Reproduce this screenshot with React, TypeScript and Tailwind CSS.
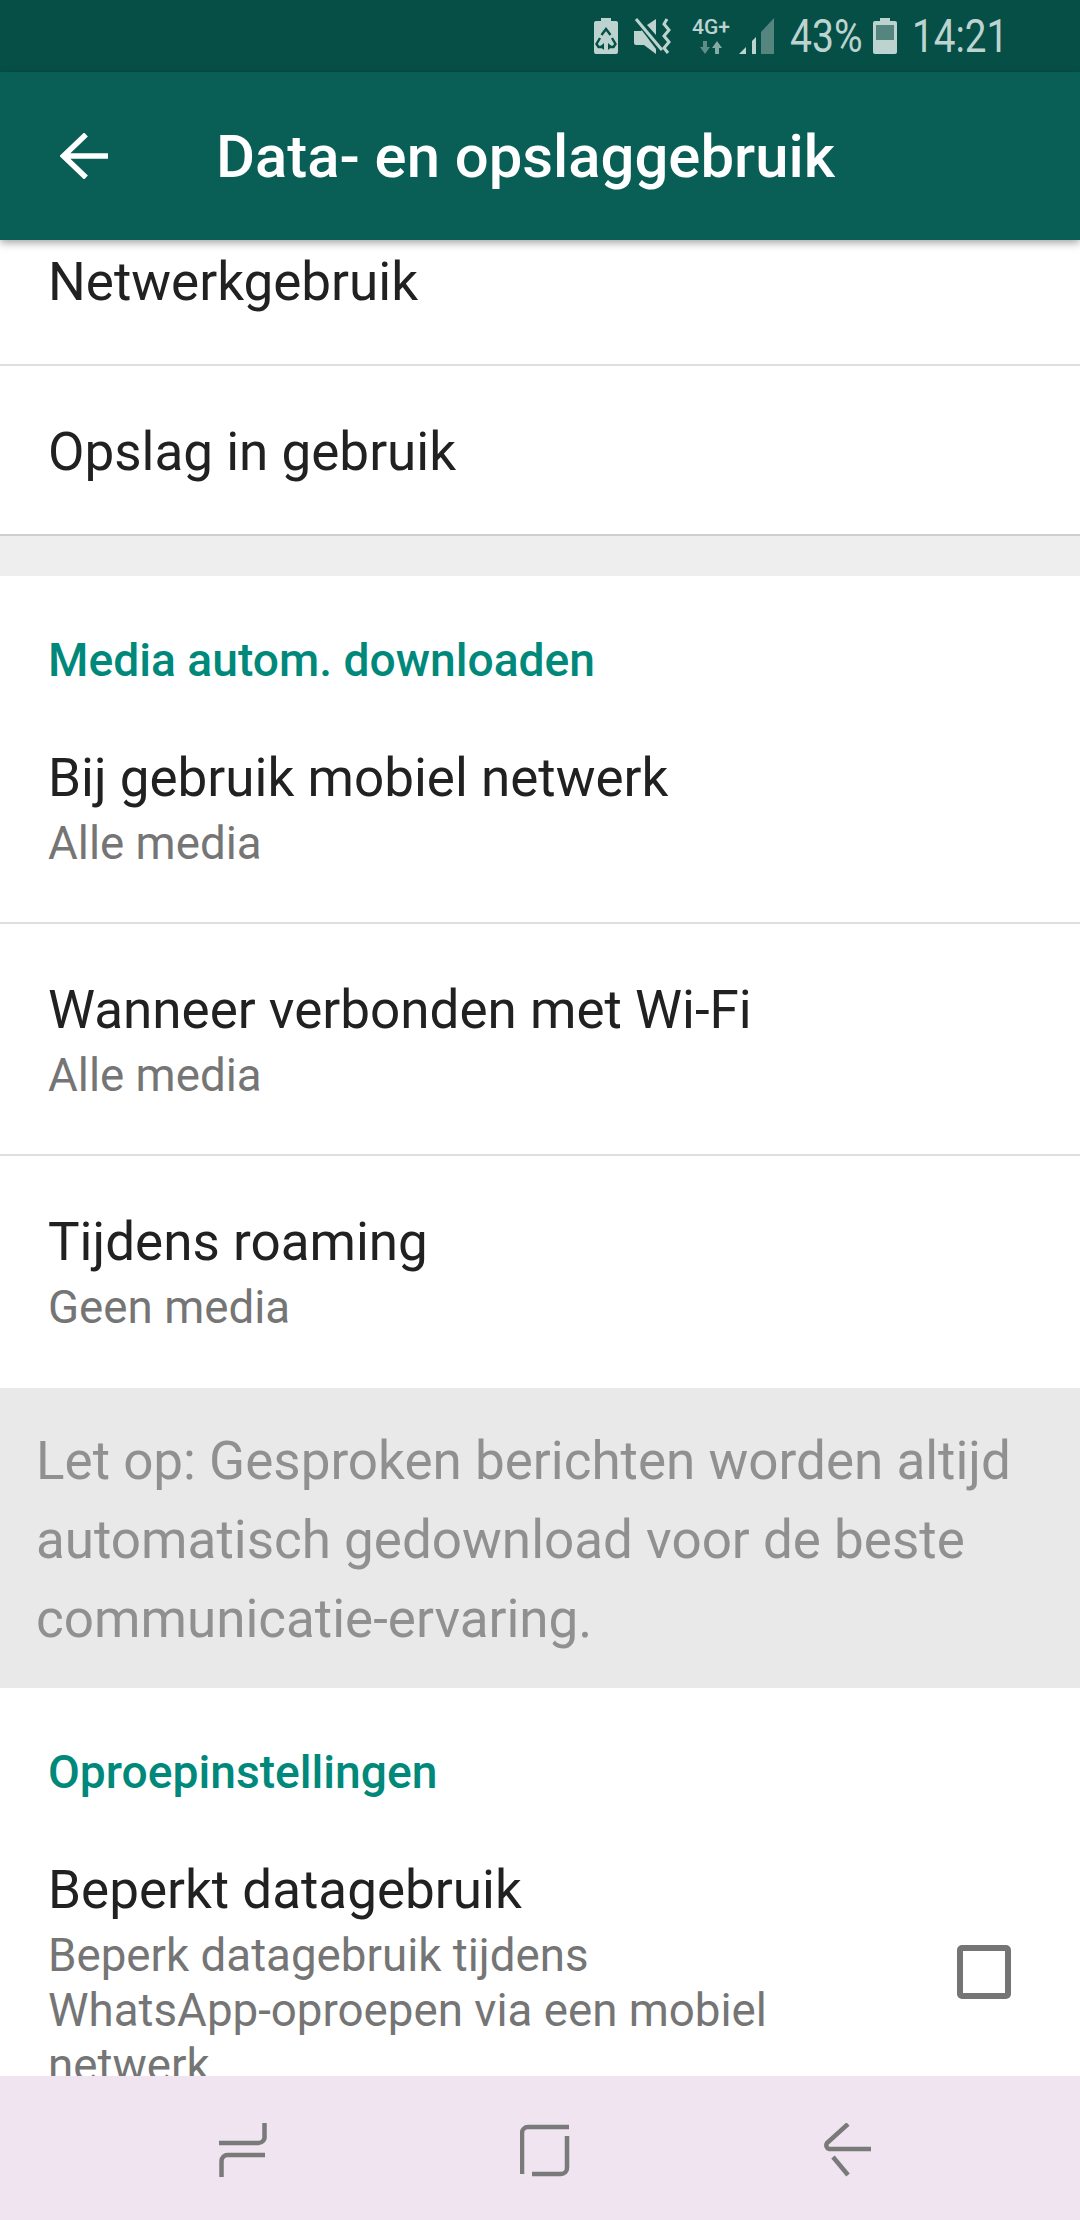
import React from "react";

const Divider = () => <div className="h-[2px] bg-[#dedede]" />;

const SectionLabel = ({ children }: { children: string }) => (
  <div className="px-[48px] pt-[56px] text-[46.200px] leading-[56px] font-medium text-[#00897b]">{children}</div>
);

const MediaRow = ({ title, sub, className }: { title: string; sub: string; className: string }) => (
  <div className={`px-[48px] ${className}`}>
    <div className="text-[53px] leading-[66px] text-[#212121]">{title}</div>
    <div className="text-[45.700px] leading-[56px] mt-[5px] text-[#757575]">{sub}</div>
  </div>
);

const StatusBar = () => (
  <div className="h-[72px] shrink-0 bg-[#064f47] flex items-center justify-end pr-[77px] text-[#bdd3cf]">
    {/* battery saver */}
    <svg width="24" height="36" viewBox="0 0 24 36" className="mr-[16px]">
      <path d="M7 0h10v3h5a2 2 0 0 1 2 2v29a2 2 0 0 1-2 2H2a2 2 0 0 1-2-2V5a2 2 0 0 1 2-2h5z" fill="currentColor" />
      <path
        d="M7.500 17l4.500-6 4.500 6M6 20l-3.500 6 2 3H10M18 20l3.500 6-2 3H14"
        fill="none"
        stroke="#064f47"
        strokeWidth="2.400"
      />
      <path d="M10 25v7l-4-3.500zM14 25v7l4-3.500z" fill="#064f47" />
    </svg>
    {/* vibrate / mute */}
    <svg width="38" height="36" viewBox="0 0 38 36" className="mr-[20px]">
      <path d="M0 13h7l2-2 13 15v10L10 27H2a2 2 0 0 1-2-2z" fill="currentColor" />
      <path d="M13 7l9-6v16z" fill="currentColor" />
      <path d="M2 2l25 33" stroke="#064f47" strokeWidth="3" />
      <path d="M2 1l26 31" stroke="currentColor" strokeWidth="3" />
      <path d="M33 1l-3 5 5 6-5 6 5 6-5 6 4 5" fill="none" stroke="currentColor" strokeWidth="3" />
    </svg>
    {/* 4G+ */}
    <div className="flex flex-col items-center w-[38px] mr-[9px]">
      <span className="text-[21px] leading-[18px] font-medium whitespace-nowrap">4G+</span>
      <svg width="22" height="13" viewBox="0 0 22 13" className="mt-[5px]">
        <path d="M3 0h4v6h3l-5 7-5-7h3z" fill="#5f8d87" />
        <path d="M17 0l5 7h-3v6h-4V7h-3z" fill="#86aaa5" />
      </svg>
    </div>
    {/* signal */}
    <svg width="36" height="36" viewBox="0 0 36 36" className="mr-[15px]">
      <path d="M0 36l7-7v7z" fill="currentColor" />
      <path d="M13 23l4-4v17h-4z" fill="currentColor" />
      <path d="M22 14L35 0v36H22z" fill="#55857f" />
    </svg>
    <span className="text-[46px] leading-none inline-block w-[70px] scale-x-[0.85] origin-left whitespace-nowrap mr-[13px]">
      43%
    </span>
    {/* battery */}
    <svg width="24" height="36" viewBox="0 0 24 36" className="mr-[15px]">
      <path d="M7 0h10v3h5a2 2 0 0 1 2 2v29a2 2 0 0 1-2 2H2a2 2 0 0 1-2-2V5a2 2 0 0 1 2-2h5z" fill="currentColor" />
      <path d="M3 7h18v15H3z" fill="#55857f" />
    </svg>
    <span className="text-[46px] leading-none inline-block w-[91px] scale-x-[0.84] origin-left whitespace-nowrap">14:21</span>
  </div>
);

const Header = () => (
  <div className="relative z-10 h-[168px] shrink-0 bg-[#095e55] flex items-center shadow-[0_3px_8px_rgba(0,0,0,0.35)]">
    <svg width="48" height="46" viewBox="0 0 48 46" className="ml-[60px]">
      <path d="M48 23H3M26 1.500L3.500 23 26 44.500" fill="none" stroke="#fff" strokeWidth="5.500" />
    </svg>
    <div className="ml-[108px] pt-[4px] text-[59.800px] leading-none font-medium text-white whitespace-nowrap">
      Data- en opslaggebruik
    </div>
  </div>
);

const NavBar = () => (
  <div className="h-[144px] shrink-0 bg-[#efe4ef] flex items-start pt-[47px] pl-[219px]">
    <svg width="48" height="54" viewBox="0 0 48 54" fill="none" stroke="#7a7a7a">
      <path d="M45.500 0v13a6 6 0 0 1-6 7H0" strokeWidth="4.500" />
      <path d="M46 32H9a6 6 0 0 0-6.500 6v16" strokeWidth="4.500" />
    </svg>
    <svg width="50" height="54" viewBox="0 0 50 54" fill="none" stroke="#7a7a7a" className="ml-[253px]">
      <path d="M49 4H8a6 6 0 0 0-6 6v41" strokeWidth="4.500" />
      <path d="M47 13v32a6 6 0 0 1-6 6H12" strokeWidth="4.500" />
    </svg>
    <svg width="48" height="54" viewBox="0 0 48 54" fill="none" stroke="#7a7a7a" className="ml-[254px]">
      <path d="M24 1L3 20a4 4 0 0 0 2 6h42" strokeWidth="4.500" />
      <path d="M9 34l15 18" strokeWidth="4.500" />
    </svg>
  </div>
);

export default function App() {
  return (
    <div className="h-[2220px] w-[1080px] flex flex-col overflow-hidden bg-white font-['Roboto',sans-serif]">
      <StatusBar />
      <Header />
      <div className="flex-1 min-h-0 overflow-hidden">
        <div className="h-[124px] px-[48px] pt-[9px] text-[53px] leading-[66px] text-[#212121]">Netwerkgebruik</div>
        <Divider />
        <div className="h-[168px] px-[48px] pt-[53px] text-[53px] leading-[66px] text-[#212121]">Opslag in gebruik</div>
        <div className="h-[2px] bg-[#cfcfcf]" />
        <div className="h-[40px] bg-[#eeeeee]" />
        <SectionLabel>Media autom. downloaden</SectionLabel>
        <MediaRow title="Bij gebruik mobiel netwerk" sub="Alle media" className="pt-[57px] h-[234px]" />
        <Divider />
        <MediaRow title="Wanneer verbonden met Wi-Fi" sub="Alle media" className="pt-[53px] h-[230px]" />
        <Divider />
        <MediaRow title="Tijdens roaming" sub="Geen media" className="pt-[53px] h-[232px]" />
        <div className="h-[300px] bg-[#e9e9e9] px-[36px] pt-[34px] text-[53px] leading-[79px] text-[#909090]">
          Let op: Gesproken berichten worden altijd automatisch gedownload voor de beste communicatie-ervaring.
        </div>
        <SectionLabel>Oproepinstellingen</SectionLabel>
        <div className="px-[48px] pt-[57px] flex items-start">
          <div className="flex-1 min-w-0">
            <div className="text-[53px] leading-[66px] text-[#212121]">Beperkt datagebruik</div>
            <div className="text-[45.700px] leading-[55px] mt-[5px] text-[#757575] w-[750px]">
              Beperk datagebruik tijdens WhatsApp-oproepen via een mobiel netwerk
            </div>
          </div>
          <div className="w-[54px] h-[54px] mt-[88px] mr-[21px] border-[6px] border-[#757575] rounded-[5px]" />
        </div>
      </div>
      <NavBar />
    </div>
  );
}
